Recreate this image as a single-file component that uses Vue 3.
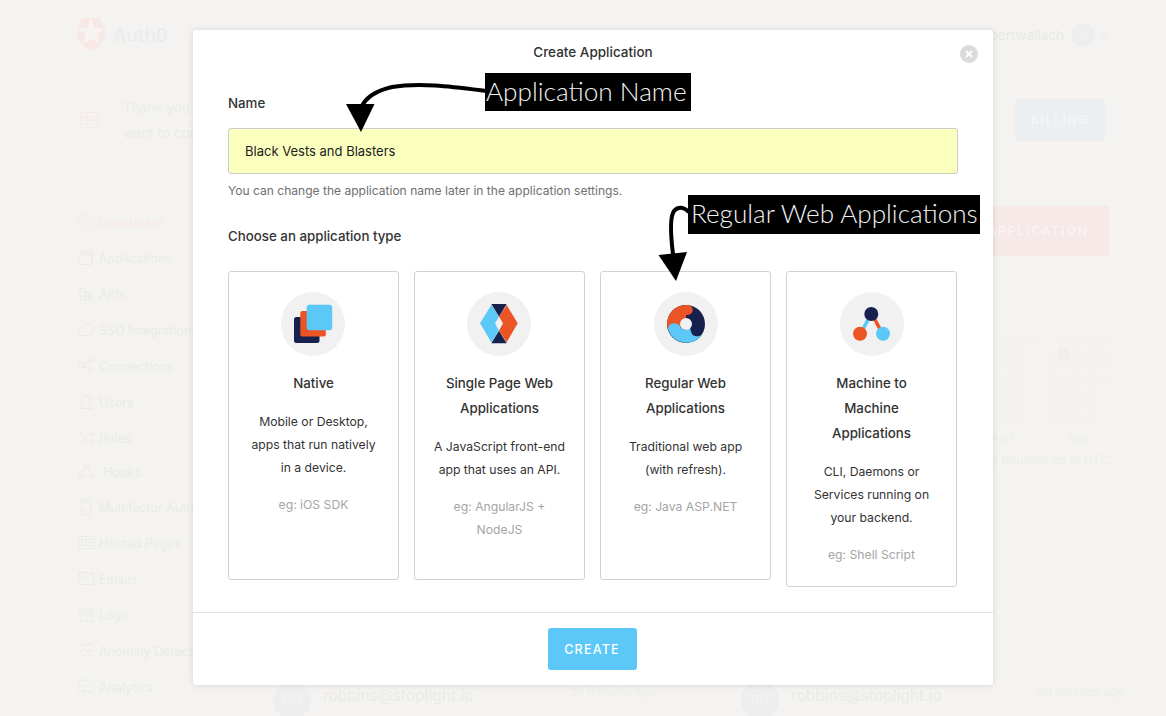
<script setup>
const navItems = [
  { label: 'Dashboard', icon: 'M8 1a7.500 7.500 0 1 0 .01 0M8 4.500a4 4 0 1 0 .01 0M9 6l-1.500 5', active: true },
  { label: 'Applications', icon: 'M1 5.500h12.500v10H1zM2.500 3.500h11M4 1.500h10.500v11' },
  { label: 'APIs', icon: 'M2 15V3.500h5V15M7 15V7.500h4V15M11 15v-4h4v4M2 15h13M2 7h9M2 11h13' },
  { label: 'SSO Integrations', icon: 'M4 14.500a3.500 3.500 0 0 1-.5-7C4.500 4.500 7.500 2.500 10.500 2.500a4.500 4.500 0 0 1 5 6c0 3-2 6-5 6z' },
  { label: 'Connections', icon: 'M3 8.500m-2.500 0a2.500 2.500 0 1 0 5 0a2.500 2.500 0 1 0-5 0M13 3m-2.500 0a2.500 2.500 0 1 0 5 0a2.500 2.500 0 1 0-5 0M13 13m-2.500 0a2.500 2.500 0 1 0 5 0a2.500 2.500 0 1 0-5 0M5.300 7.500l5.500-3.300M5.300 9.500l5.500 2.700' },
  { label: 'Users', icon: 'M1 15.500v-2c0-2 3-2.500 4-3.500C3.500 8 3.500 2 7.500 2s4 6 2.500 8c1 1 4 1.500 4 3.500v2zM10 1.500c4-1 5.500 4 4 7.500l1 1' },
  { label: 'Rules', icon: 'M0 5h4l6 7h5M0 12h4l6-7h5M13 2.500L15.500 5 13 7.500M13 9.500l2.500 2.500-2.500 2.500' },
  { label: 'Hooks', icon: 'M8.500 2m-2 0a2 2 0 1 0 4 0a2 2 0 1 0-4 0M2.500 13m-2 0a2 2 0 1 0 4 0a2 2 0 1 0-4 0M14 13m-2 0a2 2 0 1 0 4 0a2 2 0 1 0-4 0M7.500 4L3.500 11M9.500 4L13 11M4.500 13H12', hooks: true },
  { label: 'Multifactor Authentication', icon: 'M3.500 1h9.500v16H3.500zM3.500 4h9.500M3.500 12.500h9.500M8 14.500v.1', next: true },
  { label: 'Hosted Pages', icon: 'M1 2.500h15v12H1zM3.500 5.500h5v6h-5zM10.500 5.500h3.500M10.500 8.500h3.500M10.500 11.500h3.500' },
  { label: 'Emails', icon: 'M1 2.500h15v12H1zM1 2.500l7.500 7 7.500-7' },
  { label: 'Logs', icon: 'M2 2.500l6.500 1 6.500-1v13H2zM8.500 3.500v12M4 6.500h2.500M4 9.500h2.500M10.500 6.500h2.500M10.500 9.500h2.500' },
  { label: 'Anomaly Detection', icon: 'M8.500 16L1.500 8C-1 3 6 0 8.500 4c2.500-4 9.500-1 7 4zM3 8.500h3l1.500-2 2 4 1.500-2h3' },
  { label: 'Analytics', icon: 'M1 2h15v11H1zM5 16.500L6.500 13M12 16.500L10.500 13M3.500 10l3-3 2 1.500L13 4.500' }
]

const cards = [
  { key: 'native', title: ['Native'], desc: ['Mobile or Desktop,', 'apps that run natively', 'in a device.'], eg: ['eg: iOS SDK'] },
  { key: 'spa', title: ['Single Page Web', 'Applications'], desc: ['A JavaScript front-end', 'app that uses an API.'], eg: ['eg: AngularJS +', 'NodeJS'] },
  { key: 'web', title: ['Regular Web', 'Applications'], desc: ['Traditional web app', '(with refresh).'], eg: ['eg: Java ASP.NET'] },
  { key: 'm2m', title: ['Machine to', 'Machine', 'Applications'], desc: ['CLI, Daemons or', 'Services running on', 'your backend.'], eg: ['eg: Shell Script'] }
]

const heatColumns = [
  { cells: 7 }, { cells: 7 }, { cells: 7 }, { cells: 1 },
  { offset: 1, cells: 6 }, { cells: 7, hot: 1 }, { cells: 7 }, { cells: 7 }, { cells: 4 }
]
</script>

<template>
  <div class="page">
    <header class="topbar">
      <div class="brand">
        <svg class="logo" viewBox="0 0 30 33" width="30" height="33">
          <path d="M6 0H24L29 11C31 20 25 28 15 33C5 28-1 20 1 11Z" fill="#f7e8e5" />
          <path d="M15 0l3.500 10h10.500l-8.500 6.500 3.300 10.500L15 20.500 6.700 27l3.300-10.500L1 10H11.500z" fill="#f8f3f1" />
        </svg>
        <span class="brand-name">Auth0</span>
      </div>
      <div class="user">
        <span>robbertwallach</span>
        <span class="avatar small">RO</span>
        <svg width="8" height="6" viewBox="0 0 8 6"><path d="M.5 1L4 4.500 7.500 1" fill="none" stroke="#e8e7e5" /></svg>
      </div>
    </header>

    <section class="banner">
      <svg width="19" height="16" viewBox="0 0 19 16" class="banner-icon">
        <path d="M1.500.5h16a1 1 0 0 1 1 1v13a1 1 0 0 1-1 1h-16a1 1 0 0 1-1-1v-13a1 1 0 0 1 1-1zM.5 5h18M.5 8h18M3 11.500h5" fill="none" stroke="#f7e9e6" />
      </svg>
      <p class="banner-text">Thank you for trying Auth0! Your trial ends soon. If you<br />want to continue using all features, add your billing details.</p>
      <span class="billing">BILLING</span>
    </section>

    <div class="layout">
      <nav class="sidebar">
        <div v-for="item in navItems" :key="item.label" class="nav-item" :class="{ active: item.active, hooks: item.hooks, next: item.next }">
          <svg width="17" height="18" viewBox="0 0 17 18"><path :d="item.icon" fill="none" stroke="currentColor" /></svg>
          <span>{{ item.label }}</span>
        </div>
      </nav>

      <main class="content">
        <div class="action-row"><span class="new-app">CREATE APPLICATION</span></div>
        <section class="chart">
          <div class="heatmap">
            <div v-for="(col, c) in heatColumns" :key="c" class="heat-col" :class="{ split: c === 4 }">
              <span v-for="n in col.cells" :key="n" class="cell" :class="{ hot: col.hot === n - 1, first: n === 1 && col.offset }"></span>
            </div>
          </div>
          <div class="months"><span>April</span><span>May</span></div>
          <p class="chart-note">Day boundaries in UTC</p>
        </section>
        <section class="activity">
          <div v-for="n in 2" :key="n" class="activity-item">
            <span class="avatar">RO</span>
            <span class="activity-name">robbins@stoplight.io</span>
            <span class="activity-time">39 minutes ago</span>
          </div>
        </section>
      </main>
    </div>

    <div class="modal">
      <header class="modal-head">
        <span>Create Application</span>
        <span class="close">
          <svg width="18" height="18" viewBox="0 0 18 18"><circle cx="9" cy="9" r="9" fill="#d9dbdc" /><path d="M6 6l6 6M12 6l-6 6" stroke="#fff" stroke-width="2" /></svg>
        </span>
      </header>
      <div class="modal-body">
        <label class="field-label">Name</label>
        <div class="input">Black Vests and Blasters</div>
        <p class="help">You can change the application name later in the application settings.</p>
        <h3 class="field-label choose">Choose an application type</h3>
        <div class="cards">
          <article v-for="card in cards" :key="card.key" class="card" :class="card.key">
            <svg class="card-icon" viewBox="0 0 64 64" width="64" height="64">
              <circle cx="32" cy="32" r="32" fill="#f1f1f1" />
              <template v-if="card.key === 'native'">
                <rect x="13" y="25" width="25.500" height="26" rx="2.500" fill="#16214d" />
                <rect x="19.300" y="19" width="25.500" height="25.500" rx="2" fill="#eb5424" />
                <rect x="25.700" y="12.700" width="25.500" height="25.500" rx="2.500" fill="#5cc8f7" />
              </template>
              <template v-else-if="card.key === 'spa'">
                <path d="M24.300 12h15.400L32 24.700zM24.300 51.300h15.400L32 38.700z" fill="#16214d" />
                <path d="M13 31.300L24.300 13 32 24.700 28 31.300 32 38.700 24.300 50.300z" fill="#5cc8f7" />
                <path d="M50.700 31.300L39.700 13 32 24.700 36 31.300 32 38.700 39.700 50.300z" fill="#eb5424" />
              </template>
              <template v-else-if="card.key === 'web'">
                <circle cx="32" cy="32" r="19" fill="#16214d" />
                <path d="M33.700 13A19 19 0 0 0 14 38L32 34L32 23L33.700 23A5 5 0 0 0 33.700 13Z" fill="#eb5424" />
                <path d="M19 31.500A5 5 0 0 0 14.500 38.500A19 19 0 0 0 47.500 43C44 45 39 45 37.500 41L36 36C32 39 27 38 26 34C24 32 22 31 19 31.500Z" fill="#5cc8f7" />
                <circle cx="32" cy="32" r="6" fill="#f1f1f1" />
              </template>
              <template v-else>
                <path d="M21 41L31 22" stroke="#5cc8f7" stroke-width="3.600" />
                <path d="M42 41L32 22" stroke="#eb5424" stroke-width="3.600" />
                <circle cx="31.300" cy="22" r="7" fill="#16214d" />
                <circle cx="20" cy="41.700" r="7" fill="#eb5424" />
                <circle cx="43" cy="41.700" r="7" fill="#5cc8f7" />
              </template>
            </svg>
            <h4 class="card-title"><span v-for="line in card.title" :key="line">{{ line }}</span></h4>
            <p class="card-desc"><span v-for="line in card.desc" :key="line">{{ line }}</span></p>
            <p class="card-eg"><span v-for="line in card.eg" :key="line">{{ line }}</span></p>
          </article>
        </div>
      </div>
      <footer class="modal-foot"><span class="create">CREATE</span></footer>
    </div>

    <span class="note note-name">Application Name</span>
    <span class="note note-type">Regular Web Applications</span>
    <svg class="arrows" width="1166" height="716" viewBox="0 0 1166 716">
      <path d="M487 91C455 87 420 82 392 87C375 91 365 98 361 108" fill="none" stroke="#000" stroke-width="4" />
      <path d="M346 104L374.500 104L361 132z" fill="#000" />
      <path d="M689 212C684 207 678 206 674 211C669 218 671 238 673 254" fill="none" stroke="#000" stroke-width="4" />
      <path d="M658.500 255L687 252L676 281z" fill="#000" />
    </svg>
  </div>
</template>

<style scoped>
.page {
  position: relative;
  box-sizing: border-box;
  width: 1166px;
  height: 716px;
  overflow: hidden;
  padding: 0 57px 0 76px;
  background: #f4f3f1;
  color: #ecebe9;
  font-family: Inter, Roboto, "Liberation Sans", sans-serif;
}
.topbar { display: flex; align-items: center; justify-content: space-between; height: 70px; }
.brand { display: flex; align-items: center; gap: 7px; }
.logo { display: block; margin-top: -2px; }
.brand-name { font-size: 19px; font-weight: 500; color: #ecebec; }
.user { display: flex; align-items: center; padding-right: 1px; font-size: 13.500px; color: #e9e8e6; }
.user .avatar { margin: 0 5px 0 7px; }
.avatar { display: flex; align-items: center; justify-content: center; flex: none; width: 38px; height: 38px; border-radius: 50%; background: #efeeef; color: #f4f3f3; font-size: 13px; }
.avatar.small { width: 24px; height: 24px; font-size: 8px; }
.banner { display: flex; align-items: center; height: 42px; margin-top: 29px; padding: 0 4px; color: #ecebe9; font-size: 13.500px; }
.banner-icon { flex: none; }
.banner-text { flex: 1; margin: 2px 0 0 24px; line-height: 25px; }
.billing { display: flex; align-items: center; justify-content: center; box-sizing: border-box; width: 90px; height: 42px; padding-bottom: 2px; border-radius: 2px; background: #ebeff2; color: #f5f6f6; font-size: 12px; font-weight: 500; letter-spacing: 1.800px; }
.layout { display: flex; margin-top: 63px; }
.sidebar { flex: none; width: 197px; }
.nav-item { display: flex; align-items: center; gap: 4px; height: 36px; padding-left: 2px; font-size: 12.500px; color: #ebeae8; }
.nav-item svg { flex: none; }
.nav-item.active { color: #f8e9e7; }
.nav-item.hooks { height: 32px; gap: 8px; }
.nav-item.next { margin-top: 1px; }
.content { flex: 1; min-width: 0; }
.action-row { display: flex; justify-content: flex-end; margin-top: 2px; }
.new-app { display: flex; align-items: center; justify-content: flex-end; box-sizing: border-box; width: 260px; height: 50px; padding: 0 20px 2px 0; border-radius: 2px; background: #f6e9e7; color: #f8f6f5; font-size: 12px; font-weight: 500; letter-spacing: 2px; }
.chart { box-sizing: border-box; height: 338px; margin-top: 64px; margin-right: 2px; padding-top: 14px; border-top: 1px solid #f1f0ee; }
.heatmap { display: flex; justify-content: flex-end; gap: 2.300px; margin-right: -2px; }
.heat-col { display: flex; flex-direction: column; gap: 2.200px; }
.heat-col.split { margin-left: 1px; }
.cell { display: block; width: 11px; height: 11px; background: #f3f2f0; }
.cell.first { margin-top: 13.200px; }
.cell.hot { background: #efeeea; }
.months { display: flex; justify-content: flex-end; gap: 55px; margin: 7px 18px 0 0; font-size: 10px; color: #efeeec; }
.chart-note { margin: 8px -2px 0 0; text-align: right; font-size: 12.200px; color: #eeedeb; }
.activity { display: flex; width: 936px; padding-top: 23px; }
.activity-item { display: flex; flex: none; width: 468px; gap: 12px; }
.activity-name { width: 246px; margin-top: 5px; font-size: 15.500px; color: #ebeae8; }
.activity-time { margin-top: 3px; margin-left: -12px; font-size: 12px; color: #eeedeb; }

.modal {
  position: absolute;
  left: 193px;
  top: 30px;
  display: flex;
  flex-direction: column;
  width: 800px;
  height: 655px;
  border-radius: 3px;
  background: #fff;
  box-shadow: 0 0 6px rgba(0, 0, 0, .12);
  color: #333;
  font-size: 13px;
}
.modal-head { position: relative; display: flex; align-items: center; justify-content: center; height: 44px; font-size: 13.500px; font-weight: 500; color: #333; }
.close { position: absolute; top: 15px; right: 15px; display: block; height: 18px; }
.close svg { display: block; }
.modal-body { flex: 1; padding: 0 35px; }
.field-label { display: block; margin: 19px 0 15px; font-size: 13.300px; font-weight: 500; line-height: 20px; color: #333; }
.input { display: flex; align-items: center; box-sizing: border-box; height: 46px; padding: 0 16px; border: 1px solid #ccc; border-radius: 3px; background: #faffbd; font-size: 13px; color: #222; }
.help { margin: 8px 0 0; font-size: 12.050px; line-height: 18px; color: #6f6f6f; }
.choose { margin: 26px 0 25px; }
.cards { display: flex; align-items: flex-start; gap: 15px; }
.card { box-sizing: border-box; flex: none; display: flex; flex-direction: column; align-items: center; width: 171px; min-height: 309px; padding: 20px 0; border: 1px solid #d0d2d3; border-radius: 3px; text-align: center; }
.card-icon { display: block; flex: none; }
.card.native .card-icon, .card.spa .card-icon { margin-right: 1px; }
.card-title, .card-desc, .card-eg { margin: 0; }
.card-title span, .card-desc span, .card-eg span { display: block; }
.card-title { margin-top: 15px; font-size: 13.300px; font-weight: 500; line-height: 25px; color: #333; }
.card-desc { margin-top: 14px; font-size: 12.200px; line-height: 23px; color: #333; }
.card-eg { margin-top: 14px; font-size: 12.200px; line-height: 23px; color: #a5a5a5; }
.modal-foot { display: flex; justify-content: center; padding: 15px; border-top: 1px solid #e3e3e3; }
.create { display: flex; align-items: center; justify-content: center; width: 89px; height: 42px; margin-right: 2px; border-radius: 3px; background: #5cc8f7; color: #fff; font-size: 12.500px; font-weight: 500; letter-spacing: 1.200px; }

.note { position: absolute; display: flex; align-items: center; box-sizing: border-box; background: #000; color: #f2f2f2; font-family: Lato, sans-serif; font-weight: 300; white-space: nowrap; }
.note-name { left: 485px; top: 73px; width: 206px; height: 38px; padding: 0 0 3px 1px; font-size: 26.200px; }
.note-type { left: 688px; top: 195px; width: 292px; height: 39px; padding: 0 0 3px 3px; font-size: 26.100px; }
.arrows { position: absolute; inset: 0; pointer-events: none; }
</style>
